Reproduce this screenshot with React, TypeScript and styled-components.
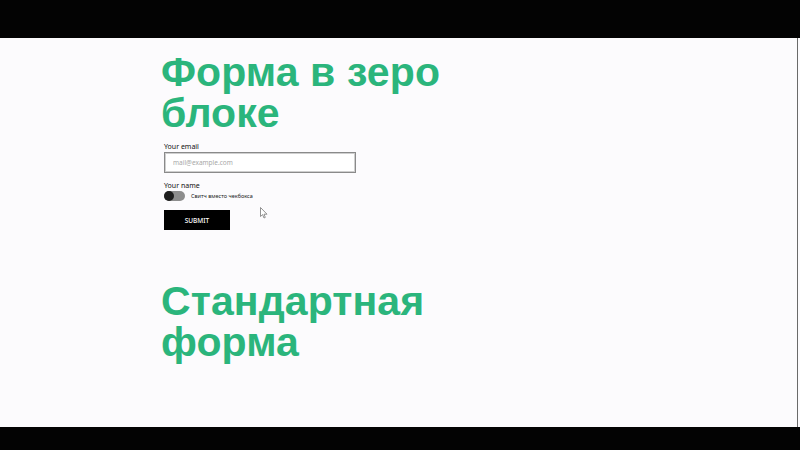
import styled, { createGlobalStyle } from 'styled-components'

const GlobalStyle = createGlobalStyle`
  html, body {
    margin: 0;
    padding: 0;
    background: #fcfbfd;
  }
  #root {
    width: 800px;
    height: 450px;
  }
`

function App() {
  return (
    <>
      <GlobalStyle />
      <Page>
        <Bar $height={38} />
        <Content>
          <Heading>
            Форма в зеро
            <br />
            блоке
          </Heading>
          <Form onSubmit={e => e.preventDefault()}>
            <Label>Your email</Label>
            <Input type="email" placeholder="mail@example.com" />
            <Label $top={8}>Your name</Label>
            <SwitchRow>
              <Track>
                <Knob />
              </Track>
              <SwitchText>Свитч вместо чекбокса</SwitchText>
            </SwitchRow>
            <Submit type="submit">SUBMIT</Submit>
          </Form>
          <Heading $top={51}>
            Стандартная
            <br />
            форма
          </Heading>
          <Cursor width="8" height="12" viewBox="0 0 8 12">
            <path
              d="M0.5 0.5 L0.5 9.5 L2.6 7.6 L4 11 L5.3 10.4 L4 7.2 L7 7.2 Z"
              fill="#fff"
              stroke="#777"
              strokeWidth="0.8"
              strokeLinejoin="round"
            />
          </Cursor>
        </Content>
        <Bar $height={23} />
      </Page>
    </>
  )
}

export default App

const Page = styled.div`
  display: flex;
  flex-direction: column;
  width: 800px;
  height: 450px;
`

const Bar = styled.div<{ $height: number }>`
  height: ${p => p.$height}px;
  flex: none;
  background: #030303;
`

const Content = styled.main`
  position: relative;
  flex: 1;
  box-sizing: border-box;
  width: 798px;
  padding: 14px 0 0 161px;
  background: #fcfbfd;
  border-right: 1px solid #6a6a6a;
`

const Heading = styled.h1<{ $top?: number }>`
  margin: ${p => p.$top ?? 0}px 0 0;
  font-family: 'Liberation Sans', Arial, sans-serif;
  font-weight: 700;
  font-size: 41px;
  line-height: 41px;
  color: #2bb57c;
  letter-spacing: 0.1px;
`

const Form = styled.form`
  display: flex;
  flex-direction: column;
  align-items: flex-start;
  margin: 8px 0 0 3px;
`

const Label = styled.label<{ $top?: number }>`
  margin-top: ${p => p.$top ?? 0}px;
  font-family: 'Noto Sans', 'Liberation Sans', sans-serif;
  font-size: 7px;
  line-height: 9px;
  color: #111;
`

const Input = styled.input`
  box-sizing: border-box;
  width: 192px;
  height: 21px;
  margin-top: 1px;
  padding: 0 8px;
  border: 1px solid #8a8a8a;
  outline: 1px solid #cfcfcf;
  outline-offset: -2px;
  background: #fff;
  font-family: 'Noto Sans', 'Liberation Sans', sans-serif;
  font-size: 6.5px;

  &::placeholder {
    color: #a8a8a8;
  }
`

const SwitchRow = styled.div`
  display: flex;
  align-items: center;
  gap: 6px;
  margin-top: 1px;
`

const Track = styled.span`
  display: flex;
  align-items: center;
  width: 21px;
  height: 10px;
  border-radius: 5px;
  background: #8d8d8d;
`

const Knob = styled.span`
  width: 10px;
  height: 10px;
  border-radius: 50%;
  background: #1e1e1e;
`

const SwitchText = styled.span`
  font-family: 'Noto Sans', 'Liberation Sans', sans-serif;
  font-size: 5.5px;
  color: #222;
`

const Submit = styled.button`
  width: 66px;
  height: 20px;
  margin-top: 9px;
  padding: 0;
  border: none;
  background: #000;
  color: #fff;
  font-family: 'Noto Sans', 'Liberation Sans', sans-serif;
  font-size: 6.5px;
  font-weight: 500;
  cursor: pointer;
`

const Cursor = styled.svg`
  position: absolute;
  left: 260px;
  top: 169px;
`
